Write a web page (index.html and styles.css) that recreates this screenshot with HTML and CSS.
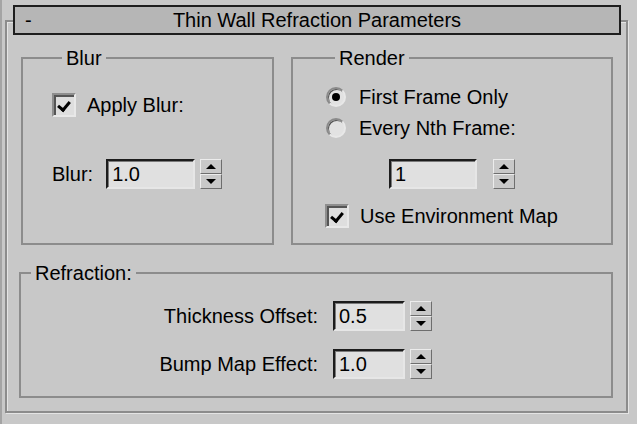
FILE: index.html
```html
<!DOCTYPE html>
<html lang="en">
<head>
    <meta charset="UTF-8">
    <title>Thin Wall Refraction Parameters</title>
    <link rel="stylesheet" href="styles.css">
</head>
<body>
    <div class="rollout">
        <div class="rollout-title">
            <span class="collapse">-</span>
            <span class="title-text">Thin Wall Refraction Parameters</span>
        </div>
        <div class="frame">
            <div class="top-groups">
                <fieldset class="group blur-group">
                    <legend>Blur</legend>
                    <label class="check-row">
                        <span class="checkbox checked"></span>
                        <span>Apply Blur:</span>
                    </label>
                    <div class="field-row blur-field">
                        <span class="field-label">Blur:</span>
                        <input class="num" type="text" value="1.0">
                        <span class="spin"><span class="spin-up"></span><span class="spin-down"></span></span>
                    </div>
                </fieldset>
                <fieldset class="group render-group">
                    <legend>Render</legend>
                    <label class="radio-row">
                        <span class="radio selected"></span>
                        <span>First Frame Only</span>
                    </label>
                    <label class="radio-row second">
                        <span class="radio"></span>
                        <span>Every Nth Frame:</span>
                    </label>
                    <div class="field-row nth-field">
                        <input class="num" type="text" value="1">
                        <span class="spin"><span class="spin-up"></span><span class="spin-down"></span></span>
                    </div>
                    <label class="check-row env-row">
                        <span class="checkbox checked"></span>
                        <span>Use Environment Map</span>
                    </label>
                </fieldset>
            </div>
            <fieldset class="group refraction-group">
                <legend>Refraction:</legend>
                <div class="param-grid">
                    <span class="param-label">Thickness Offset:</span>
                    <div class="field-row">
                        <input class="num short" type="text" value="0.5">
                        <span class="spin"><span class="spin-up"></span><span class="spin-down"></span></span>
                    </div>
                    <span class="param-label">Bump Map Effect:</span>
                    <div class="field-row">
                        <input class="num short" type="text" value="1.0">
                        <span class="spin"><span class="spin-up"></span><span class="spin-down"></span></span>
                    </div>
                </div>
            </fieldset>
        </div>
    </div>
</body>
</html>
```

FILE: styles.css
```css
body {
    margin: 0;
    background: #c8c8c8;
    color: #000;
    font-family: "Liberation Sans", Arial, sans-serif;
    font-size: 20px;
    line-height: 24px;
}
.rollout {
    border-left: 2px solid #a4a4a4;
    padding: 5px 9px 0 3px;
    height: 419px;
}
.rollout-title {
    position: relative;
    z-index: 1;
    display: grid;
    grid-template-columns: 1fr auto 1fr;
    align-items: center;
    box-sizing: border-box;
    height: 30px;
    margin: 0 7px 0 8px;
    border: 2px solid #1e1e1e;
    background: #b6b6b6;
}
.collapse {
    padding-left: 10px;
}
.frame {
    margin-top: -15px;
    border: 2px solid #8c8c8c;
    box-shadow: inset 1px 1px 0 #e4e4e4, 1px 1px 0 #e4e4e4;
    padding: 25px 13px 13px 14px;
}
.top-groups {
    display: grid;
    grid-template-columns: 253px 322px;
    column-gap: 17px;
}
.group {
    margin: 0;
    min-width: 0;
    border: 2px solid #8c8c8c;
}
.group legend {
    margin-left: 10px;
    padding: 0 4px;
    line-height: 22px;
}
.blur-group {
    padding: 24px 0 54px 29px;
}
.render-group {
    padding: 16px 0 15px 32px;
}
.refraction-group {
    margin: 17px 0 0 -2px;
    padding: 17px 0 17px 0;
}

/* checkbox and radio rows */
.check-row, .radio-row {
    display: flex;
    align-items: center;
    gap: 11px;
    height: 24px;
}
.radio-row {
    gap: 13px;
    margin-left: 1px;
}
.radio-row.second {
    margin-top: 7px;
}
.checkbox {
    box-sizing: border-box;
    width: 24px;
    height: 24px;
    border: 2px solid;
    border-color: #8e8e8e #e8e8e8 #e8e8e8 #8e8e8e;
    background: #dedede;
    box-shadow: inset 2px 2px 0 #555;
    position: relative;
}
.checkbox.checked::after {
    content: "";
    position: absolute;
    left: 6px;
    top: 4px;
    width: 5px;
    height: 9px;
    border: solid #000;
    border-width: 0 3px 3px 0;
    transform: rotate(40deg);
}
.radio {
    box-sizing: border-box;
    width: 20px;
    height: 20px;
    border-radius: 50%;
    border: 2px solid;
    border-color: #8a8a8a #e8e8e8 #e8e8e8 #8a8a8a;
    background: #e2e2e2;
    box-shadow: inset 1px 1px 0 #555;
    display: flex;
    align-items: center;
    justify-content: center;
}
.radio.selected::after {
    content: "";
    width: 8px;
    height: 8px;
    border-radius: 50%;
    background: #000;
}

/* numeric fields */
.field-row {
    display: flex;
    align-items: center;
    gap: 5px;
    height: 30px;
}
.blur-field {
    margin-top: 42px;
}
.blur-field .field-label {
    margin-right: 8px;
}
.nth-field {
    margin: 19px 0 0 64px;
    gap: 16px;
}
.env-row {
    margin-top: 15px;
}
.num {
    box-sizing: border-box;
    width: 89px;
    height: 30px;
    margin: 0;
    padding: 0 0 0 4px;
    border: 2px solid;
    border-color: #1c1c1c #e6e6e6 #e6e6e6 #1c1c1c;
    box-shadow: inset 1px 1px 0 #7a7a7a;
    background: #e0e0e0;
    color: #000;
    font: inherit;
    outline: none;
}
.nth-field .num {
    width: 88px;
}
.num.short {
    width: 72px;
}
.spin {
    display: flex;
    flex-direction: column;
    width: 22px;
    height: 30px;
}
.spin-up, .spin-down {
    box-sizing: border-box;
    flex: 1;
    display: flex;
    align-items: center;
    justify-content: center;
    border: 1px solid;
    border-color: #ececec #6e6e6e #6e6e6e #ececec;
    background: #c8c8c8;
}
.spin-up::after {
    content: "";
    border: 5px solid transparent;
    border-top: 0;
    border-bottom: 5px solid #000;
}
.spin-down::after {
    content: "";
    border: 5px solid transparent;
    border-bottom: 0;
    border-top: 5px solid #000;
}

/* refraction parameters */
.param-grid {
    display: grid;
    grid-template-columns: 297px auto;
    column-gap: 15px;
    row-gap: 18px;
    align-items: center;
}
.param-label {
    text-align: right;
}
```
